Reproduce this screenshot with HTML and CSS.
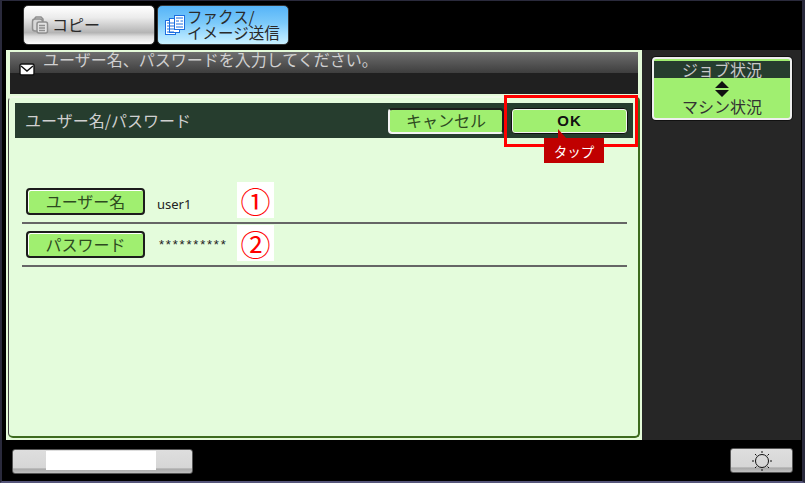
FILE: index.html
```html
<!DOCTYPE html>
<html lang="ja">
<head>
<meta charset="utf-8">
<title>ユーザー名/パスワード</title>
<link rel="stylesheet" href="styles.css">
</head>
<body>
<div class="screen">
  <div class="tabs">
    <div class="tab tab-copy">
      <svg class="tab-icon" width="18" height="18" viewBox="0 0 18 18"><path d="M5 1h5l2 2v3H5a2 2 0 0 0-1 0V2z" fill="#ddd" stroke="#8f8f8f" stroke-width="1.5"/><rect x="1.5" y="3" width="10" height="12" rx="2.5" fill="#d8d8d8" stroke="#8f8f8f" stroke-width="1.5"/><rect x="6" y="6" width="10.5" height="11" rx="2" fill="#e2e2e2" stroke="#8f8f8f" stroke-width="1.5"/><path d="M8 9.500h6M8 12h6M8 14.500h6" stroke="#8f8f8f" stroke-width="1.3"/></svg>
      <span class="tab-label">コピー</span>
    </div>
    <div class="tab tab-fax">
      <svg class="tab-icon" width="20" height="20" viewBox="0 0 20 20"><rect x="0.5" y="5.5" width="10" height="14" fill="#fff" stroke="#1d6fe0"/><rect x="4.5" y="3.5" width="10" height="14" fill="#fff" stroke="#1d6fe0"/><rect x="9.5" y="0.5" width="10" height="14" fill="#fff" stroke="#1d6fe0"/><path d="M2 8h7M2 11h7M2 14h7M2 17h7M11 3h7M11 6h3M15.500 6h2.500M11 9h7M11 12h7" stroke="#1d6fe0"/></svg>
      <span class="tab-label">ファクス/<br>イメージ送信</span>
    </div>
  </div>
  <div class="main">
    <div class="left">
      <div class="message">
        <div class="message-top">
          <svg class="mail" width="16" height="13" viewBox="0 0 16 13"><rect x="1" y="1" width="14" height="11" rx="1.5" fill="#fff" stroke="#111" stroke-width="1.4"/><path d="M2 3l6 5 6-5" fill="none" stroke="#111" stroke-width="1.4"/></svg>
          <span class="message-text">ユーザー名、パスワードを入力してください。</span>
        </div>
        <div class="message-bottom"></div>
      </div>
      <div class="panel">
        <div class="titlebar">
          <span class="title">ユーザー名/パスワード</span>
          <button class="btn btn-cancel">キャンセル</button>
          <button class="btn btn-ok">OK</button>
        </div>
        <div class="rows">
          <div class="row">
            <button class="btn btn-field">ユーザー名</button>
            <span class="value value-user">user1</span>
            <span class="num">①</span>
          </div>
          <div class="row">
            <button class="btn btn-field">パスワード</button>
            <span class="value value-pass">**********</span>
            <span class="num">②</span>
          </div>
        </div>
        <div class="highlight"></div>
        <div class="callout">タップ</div>
      </div>
    </div>
    <div class="side">
      <div class="status">
        <div class="status-top">ジョブ状況</div>
        <svg class="arrows" width="16" height="16" viewBox="0 0 16 16"><path d="M8 0l7 7H1zM1 9h14l-7 7z" fill="#111"/></svg>
        <div class="status-bottom">マシン状況</div>
      </div>
    </div>
  </div>
  <div class="bottom">
    <div class="grey-btn grey-wide"><div class="blank"></div></div>
    <div class="grey-btn grey-small">
      <svg width="22" height="22" viewBox="0 0 22 22" fill="none" stroke="#111"><circle cx="11" cy="11" r="6.500"/><path d="M11 1v2M11 19v2M1 11h2M19 11h2M4 4l1.500 1.500M16.500 16.500L18 18M18 4l-1.500 1.500M5.500 16.500L4 18"/></svg>
    </div>
  </div>
</div>
</body>
</html>
```
FILE: styles.css
```css
* { box-sizing: border-box; }
html, body { margin: 0; padding: 0; }
body { width: 805px; height: 483px; overflow: hidden; background: #000; font-family: "Noto Sans CJK JP", "Noto Sans", sans-serif; }
.screen { width: 805px; height: 483px; background: #000; border: 2px solid #2a2a3c; border-top-width: 1px; border-right-width: 3px; border-bottom-color: #55557a; padding: 4px 0 0 4px; display: flex; flex-direction: column; }
.tabs { height: 45px; display: flex; gap: 2px; padding-left: 17px; flex: none; }
.tab { width: 132px; height: 40px; border-radius: 5px; border: 1px solid #333; display: flex; align-items: center; color: #2a2a2a; }
.tab-copy { background: linear-gradient(#fff 0%, #ececec 30%, #b4b4b4 70%, #dcdcdc 80%, #fff 100%); padding-left: 7px; font-size: 16px; gap: 3px; }
.tab-fax { background: linear-gradient(#56b4f8 0%, #7ccafa 45%, #a8e0ff 75%, #c8f0ff 100%); padding-left: 7px; font-size: 15.5px; line-height: 16px; gap: 2px; }
.tab-label { white-space: nowrap; margin-top: -2px; }
.tab-icon { flex: none; }
.main { display: flex; height: 390px; margin-right: 1px; flex: none; }
.left { width: 636px; display: flex; flex-direction: column; background: #e4fad9; padding: 2px 0 2px 0; flex: none; }
.message { margin-left: 4px; margin-right: 4px; height: 42px; background: #222; flex: none; }
.message-top { height: 21px; background: linear-gradient(#6e6e6e, #3e3e3e); color: #d0d0d0; font-size: 16px; line-height: 16px; display: flex; padding: 0 0 0 9px; }
.message-text { margin-top: -1px; }
.mail { margin-top: 11px; margin-right: 8px; flex: none; }
.message-bottom { height: 21px; background: #202020; }
.panel { position: relative; margin: 2px 2px 0 2px; flex: 1; background: #e4fcdc; border: 2px solid #f0fae8; border-left: 1px solid #444; border-right-color: #3d6b1f; border-bottom-color: #3d6b1f; border-radius: 5px; padding: 0 0 0 6px; }
.titlebar { height: 35px; margin-top: 5px; width: 618px; background: #263d2e; display: flex; align-items: center; padding-left: 10px; }
.title { color: #d0d0d0; font-size: 16px; flex: 1; margin-top: -2px; }
.btn { font-family: inherit; padding: 0 0 2px; margin: 0; background: #a0ef70; border: 2px solid #1c1c1c; border-radius: 4px; color: #2d4a1f; display: flex; align-items: center; justify-content: center; box-shadow: inset 1px 1px 0 #fff; }
.btn-cancel { width: 116px; height: 26px; font-size: 16px; margin-right: 7px; border-color: #1c1c1c #1c1c1c #f4f4f4 #f4f4f4; box-shadow: none; }
.btn-ok { width: 117px; height: 26px; padding: 0; font-size: 15px; font-weight: 700; letter-spacing: 1px; color: #111; margin-right: 5px; font-family: "Liberation Sans", sans-serif; border: 1px solid #111; box-shadow: inset 0 0 0 1px #f4f4f4; }
.rows { margin-top: 43px; margin-left: 7px; width: 605px; }
.row { height: 43px; border-bottom: 2px solid #666; display: flex; align-items: center; padding-left: 4px; }
.btn-field { width: 119px; height: 27px; font-size: 16px; flex: none; }
.value { font-family: "Noto Sans", sans-serif; font-size: 13px; color: #222; margin-left: 12px; width: 80px; flex: none; }
.value-user { margin-top: 5px; }
.value-pass { font-family: "Liberation Sans", sans-serif; letter-spacing: 1.8px; margin-left: 14px; width: 78px; white-space: nowrap; }
.num { width: 37px; height: 36px; background: #fff; color: #f00; font-size: 30px; line-height: 36px; text-align: center; flex: none; margin-top: -3px; }
.highlight { position: absolute; left: 495px; top: -3px; width: 134px; height: 52px; border: 3px solid #f00; pointer-events: none; }
.callout { position: absolute; left: 535px; top: 40px; width: 60px; height: 25px; background: #c00000; color: #fff; font-size: 13.5px; line-height: 26px; text-align: center; }
.callout::before { content: ""; position: absolute; left: 14px; top: -9px; border-right: 8px solid transparent; border-bottom: 9px solid #c00000; }
.side { flex: 1; background: #262626; padding: 7px 0 0 10px; }
.status { width: 140px; height: 63px; background: #a0ef70; border: 2px solid #eee; border-radius: 4px; box-shadow: 0 0 0 1px #111; display: flex; flex-direction: column; align-items: center; color: #333; font-size: 16px; line-height: 16px; }
.status-top { width: 100%; height: 17px; background: #263d2e; color: #c8c8c8; text-align: center; line-height: 16px; flex: none; margin-top: 2px; }
.arrows { margin-top: 3px; flex: none; }
.status-bottom { margin-top: 1px; }
.bottom { display: flex; justify-content: space-between; padding: 8px 0 0 6px; flex: none; }
.grey-btn { height: 25px; border-radius: 3px; border: 1px solid #555; background: linear-gradient(#dedede 0%, #d6d6d6 78%, #a8a8a8 82%, #c0c0c0 100%); display: flex; align-items: center; justify-content: center; }
.grey-wide { width: 181px; margin-top: 1px; }
.blank { width: 110px; height: 19px; background: #fff; margin: -2px 0 0 -4px; }
.grey-small { width: 63px; margin-right: 9px; }
```
